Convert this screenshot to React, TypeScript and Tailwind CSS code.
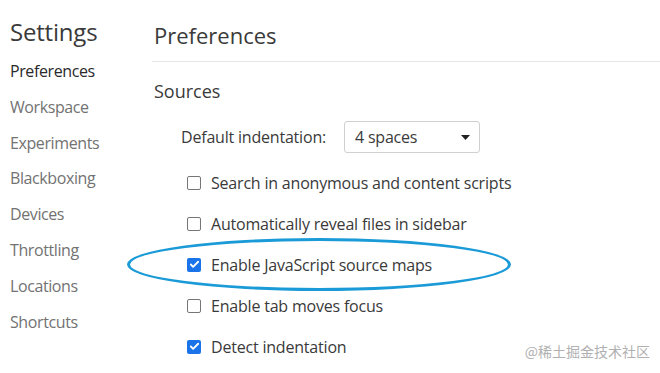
import { Check } from "lucide-react";

const sidebar = [
  "Preferences",
  "Workspace",
  "Experiments",
  "Blackboxing",
  "Devices",
  "Throttling",
  "Locations",
  "Shortcuts",
];

const options = [
  { label: "Search in anonymous and content scripts", checked: false },
  { label: "Automatically reveal files in sidebar", checked: false },
  { label: "Enable JavaScript source maps", checked: true, circled: true },
  { label: "Enable tab moves focus", checked: false },
  { label: "Detect indentation", checked: true },
];

function Checkbox({ checked }: { checked: boolean }) {
  if (checked) {
    return (
      <span className="flex h-[14px] w-[14px] items-center justify-center rounded-[2px] bg-[#1a73e8]">
        <Check className="h-[11px] w-[11px] text-white" strokeWidth={4} />
      </span>
    );
  }
  return (
    <span className="h-[14px] w-[14px] rounded-[2px] border border-[#767676] bg-white" />
  );
}

export default function App() {
  return (
    <div className="relative flex h-[373px] w-[660px] overflow-hidden bg-white font-['Open_Sans',sans-serif] text-[#3a3a3a]">
      <aside className="w-[152px] shrink-0 pl-[10px] pt-[15px]">
        <h1 className="text-[24px] leading-[34px] tracking-[-0.2px] text-[#3a3a3a]">Settings</h1>
        <ul className="mt-[5px]">
          {sidebar.map((item, i) => (
            <li
              key={item}
              className={`h-[35.8px] text-[16px] leading-[35.8px] tracking-[-0.4px] ${
                i === 0 ? "text-[#2a2a2a]" : "text-[#727272]"
              }`}
            >
              {item}
            </li>
          ))}
        </ul>
      </aside>

      <main className="flex-1 pt-[19px]">
        <h2 className="pl-[2px] text-[22px] leading-[32px] text-[#3a3a3a]">Preferences</h2>
        <div className="mt-[10px] h-px bg-[#e6e6e6]" />
        <h3 className="mt-[16px] pl-[2px] text-[18px] leading-[26px] text-[#3a3a3a]">Sources</h3>

        <div className="mt-[17px] flex items-center pl-[29px]">
          <span className="w-[163px] text-[16px] tracking-[-0.2px]">Default indentation:</span>
          <div className="flex h-[32px] w-[136px] items-center justify-between rounded-[3px] border border-[#d0d0d0] pl-[10px] pr-[9px]">
            <span className="text-[16px] tracking-[-0.2px]">4 spaces</span>
            <svg width="9" height="5" viewBox="0 0 9 5">
              <path d="M0 0h9L4.5 5z" fill="#222" />
            </svg>
          </div>
        </div>

        <ul className="mt-[9px] pl-[35px]">
          {options.map((o) => (
            <li key={o.label} className="relative flex h-[41px] items-center gap-[10px]">
              <Checkbox checked={o.checked} />
              <span className="text-[16px] tracking-[-0.2px]">{o.label}</span>
              {o.circled && (
                <span className="pointer-events-none absolute left-[-60px] top-[-6px] h-[53px] w-[384px] rounded-[50%] border-[3.5px] border-[#1a9ad6]" />
              )}
            </li>
          ))}
        </ul>
      </main>

      <span className="absolute bottom-[11px] right-[10px] font-['Noto_Sans_CJK_SC',sans-serif] text-[14px] text-[#b0b0b0]">
        @稀土掘金技术社区
      </span>
    </div>
  );
}
